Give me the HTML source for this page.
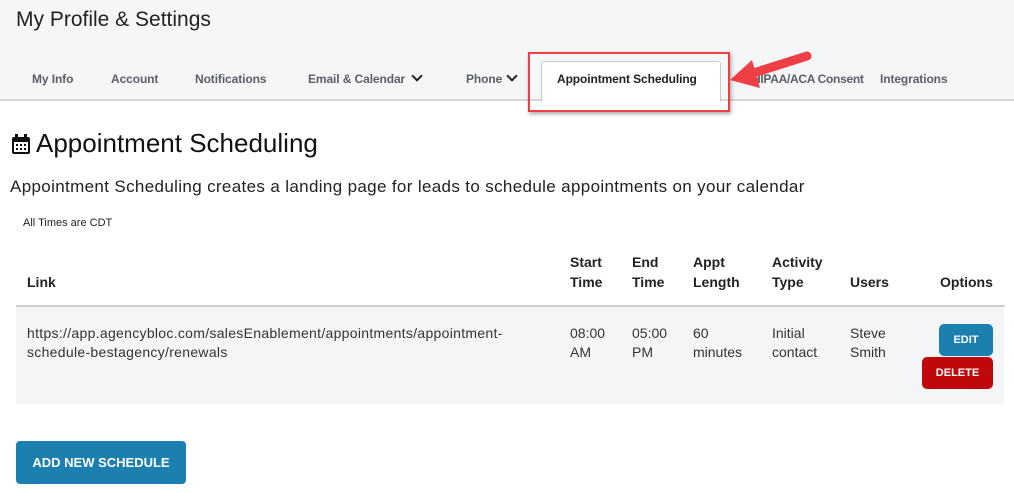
<!DOCTYPE html><html><head><style>
body{margin:0;width:1014px;height:493px;overflow:hidden;font-family:"Liberation Sans",sans-serif;background:#fff;color:#222;position:relative}
.hdr{position:absolute;left:0;top:0;width:1014px;height:99px;background:#f5f6f7;border-bottom:2px solid #d6d8db}
.t{position:absolute;white-space:nowrap}
.tab{position:absolute;top:72px;font-size:12px;font-weight:600;letter-spacing:-0.1px;color:#5a5f66}
.chev{display:inline-block;width:6px;height:6px;border-right:2px solid #222;border-bottom:2px solid #222;transform:rotate(45deg);margin-left:8px;position:relative;top:-3px}
.btn{position:absolute;color:#fff;font-size:11px;font-weight:bold;text-align:center;border-radius:5px}
</style></head><body>
<div class="hdr"></div>
<div class="t" style="left:16px;top:8px;font-size:21px;color:#222">My Profile &amp; Settings</div>
<div class="tab" style="left:32px">My Info</div>
<div class="tab" style="left:111px">Account</div>
<div class="tab" style="left:195px">Notifications</div>
<div class="tab" style="left:308px">Email &amp; Calendar<span class="chev"></span></div>
<div class="tab" style="left:466px">Phone<span class="chev" style="margin-left:6px"></span></div>
<div style="position:absolute;left:541px;top:61px;width:178px;height:40px;background:#fff;border:1px solid #ccc;border-bottom:none;border-radius:3px 3px 0 0"></div>
<div class="tab" style="left:557px;color:#222">Appointment Scheduling</div>
<div class="tab" style="left:752px;letter-spacing:-0.3px">HIPAA/ACA Consent</div>
<div class="tab" style="left:880px">Integrations</div>
<div style="position:absolute;left:528px;top:52px;width:198px;height:56px;border:2px solid #ee3f45;box-shadow:1px 2px 4px rgba(0,0,0,.35)"></div>
<svg style="position:absolute;left:725px;top:48px" width="90" height="45"><path d="M82 8 L22 27" stroke="#ee3f45" stroke-width="9" stroke-linecap="round"/><path d="M5 32 L27 12 L35 40 Z" fill="#ee3f45"/></svg>
<svg style="position:absolute;left:11px;top:134px" width="20" height="21"><rect x="1" y="3" width="18" height="17" rx="2" fill="#111"/><rect x="4" y="0" width="3" height="5" fill="#111"/><rect x="13" y="0" width="3" height="5" fill="#111"/><rect x="3" y="8" width="14" height="10" fill="#fff"/><g fill="#111"><rect x="5" y="10" width="2" height="2"/><rect x="9" y="10" width="2" height="2"/><rect x="13" y="10" width="2" height="2"/><rect x="5" y="14" width="2" height="2"/><rect x="9" y="14" width="2" height="2"/><rect x="13" y="14" width="2" height="2"/></g></svg>
<div class="t" style="left:36px;top:128px;font-size:26px;color:#111">Appointment Scheduling</div>
<div class="t" style="left:10px;top:177px;font-size:17px;letter-spacing:0.35px;color:#222">Appointment Scheduling creates a landing page for leads to schedule appointments on your calendar</div>
<div class="t" style="left:23px;top:217px;font-size:11px;color:#222">All Times are CDT</div>
<div style="position:absolute;left:16px;top:305px;width:989px;height:2px;background:#ccd0d4"></div>
<div style="position:absolute;left:16px;top:307px;width:988px;height:97px;background:#f4f5f7"></div>
<div style="font-size:14px;line-height:20px;font-weight:bold;color:#222">
<div class="t" style="left:27px;top:272px">Link</div>
<div class="t" style="left:570px;top:252px">Start<br>Time</div>
<div class="t" style="left:632px;top:252px">End<br>Time</div>
<div class="t" style="left:693px;top:252px">Appt<br>Length</div>
<div class="t" style="left:772px;top:252px">Activity<br>Type</div>
<div class="t" style="left:850px;top:272px">Users</div>
<div class="t" style="left:940px;top:272px">Options</div>
</div>
<div style="font-size:14px;line-height:19px;color:#333">
<div class="t" style="left:27px;top:324px;letter-spacing:0.3px">https://app.agencybloc.com/salesEnablement/appointments/appointment-<br>schedule-bestagency/renewals</div>
<div class="t" style="left:570px;top:324px">08:00<br>AM</div>
<div class="t" style="left:632px;top:324px">05:00<br>PM</div>
<div class="t" style="left:693px;top:324px">60<br>minutes</div>
<div class="t" style="left:772px;top:324px">Initial<br>contact</div>
<div class="t" style="left:850px;top:324px">Steve<br>Smith</div>
</div>
<div class="btn" style="left:939px;top:324px;width:54px;height:32px;line-height:32px;background:#1b7fb0">EDIT</div>
<div class="btn" style="left:922px;top:357px;width:71px;height:32px;line-height:32px;background:#c0080c">DELETE</div>
<div class="btn" style="left:16px;top:441px;width:170px;height:43px;line-height:43px;background:#1b7fb0;font-size:13px;border-radius:4px">ADD NEW SCHEDULE</div>
</body></html>
